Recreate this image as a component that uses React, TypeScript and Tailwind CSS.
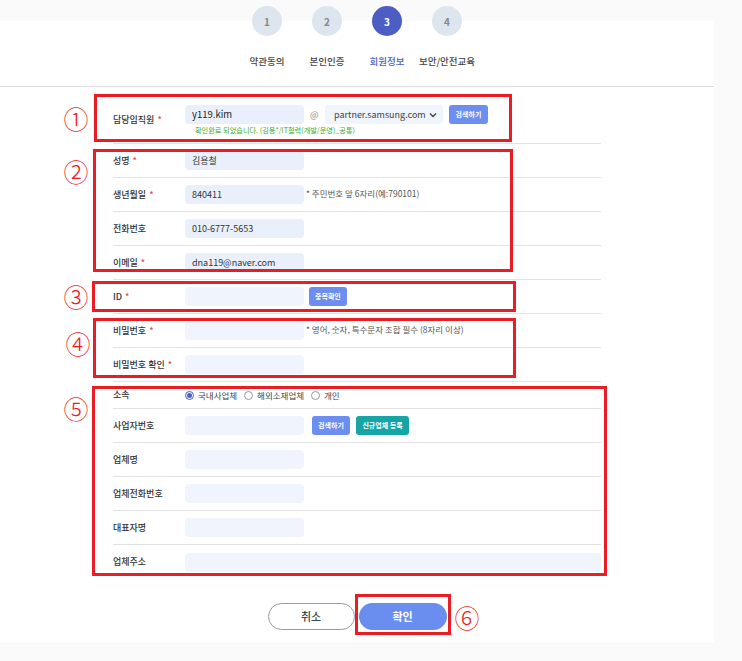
import React from 'react';

const font = "font-['Noto_Sans_CJK_KR','Noto_Sans',sans-serif]";

function Req() {
  return <span className="ml-[3px] text-[#e5484d]">*</span>;
}

function Field({ value, wide }: { value?: string; wide?: boolean }) {
  return (
    <div
      className={`flex h-[19px] items-center rounded-[4px] pl-[7px] text-[9px] text-[#333] ${
        wide ? 'w-full' : 'w-[119px]'
      } ${value ? 'bg-[#e9f0fc]' : 'bg-[#f0f5fd]'}`}
    >
      {value}
    </div>
  );
}

function Btn({ children, teal }: { children: React.ReactNode; teal?: boolean }) {
  return (
    <div
      className={`flex h-[19px] items-center justify-center rounded-[3px] px-[6px] text-[7px] font-bold text-white ${
        teal ? 'bg-[#16a4a6]' : 'bg-[#6b8ef0]'
      }`}
    >
      {children}
    </div>
  );
}

function Row({
  label,
  req,
  children,
  h = 'h-[34px]',
  last,
}: {
  label: string;
  req?: boolean;
  children?: React.ReactNode;
  h?: string;
  last?: boolean;
}) {
  return (
    <div className={`flex items-center ${h} ${last ? '' : 'border-b border-[#e2e2e2]'}`}>
      <div className="w-[72px] shrink-0 text-[9px] font-medium text-[#333]">
        {label}
        {req && <Req />}
      </div>
      <div className="flex flex-1 items-center">{children}</div>
    </div>
  );
}

function Radio({ label, on }: { label: string; on?: boolean }) {
  return (
    <div className="flex items-center gap-[4px] text-[8.5px] text-[#444]">
      <span
        className={`flex h-[9px] w-[9px] items-center justify-center rounded-full border bg-white ${
          on ? 'border-[#4d5ec4]' : 'border-[#999]'
        }`}
      >
        {on && <span className="h-[5px] w-[5px] rounded-full bg-[#4d5ec4]" />}
      </span>
      {label}
    </div>
  );
}

const steps = [
  { n: '1', label: '약관동의' },
  { n: '2', label: '본인인증' },
  { n: '3', label: '회원정보', active: true },
  { n: '4', label: '보안/안전교육' },
];

const marks = [
  { t: '①', x: 76, y: 118 },
  { t: '②', x: 76, y: 171 },
  { t: '③', x: 76, y: 296 },
  { t: '④', x: 78, y: 343 },
  { t: '⑤', x: 76, y: 408 },
  { t: '⑥', x: 467, y: 617 },
];

const boxes = [
  'left-[94px] top-[94px] w-[418px] h-[48px]',
  'left-[93px] top-[149px] w-[420px] h-[123px]',
  'left-[92px] top-[281px] w-[424px] h-[31px]',
  'left-[93px] top-[318px] w-[423px] h-[60px]',
  'left-[92px] top-[386px] w-[515px] h-[190px]',
  'left-[355px] top-[594px] w-[96px] h-[41px]',
];

export default function App() {
  return (
    <div className={`relative h-[661px] w-[742px] overflow-hidden bg-[#fafafa] pt-[21px] ${font}`}>
      <div className="h-[621px] w-[714px] bg-white">
        {/* steps */}
        <div className="flex h-[66px] justify-center border-b border-[#dedede]">
          <div className="-mt-[15px] flex">
            {steps.map((s) => (
              <div key={s.n} className="flex w-[60px] flex-col items-center">
                <div
                  className={`flex h-[30px] w-[30px] items-center justify-center rounded-full text-[10px] font-bold ${
                    s.active ? 'bg-[#4c5dc3] text-white' : 'bg-[#dde5ef] text-[#888]'
                  }`}
                >
                  {s.n}
                </div>
                <div
                  className={`mt-[18px] whitespace-nowrap text-[9.5px] leading-[14px] font-medium ${
                    s.active ? 'text-[#4c5dc3]' : 'text-[#444]'
                  }`}
                >
                  {s.label}
                </div>
              </div>
            ))}
          </div>
        </div>

        {/* form */}
        <div className="ml-[113px] w-[488px]">
          <Row label="담당임직원" req h="h-[57px] pt-[10px]">
            <div className="flex flex-col">
              <div className="flex items-center">
                <div className="flex h-[19px] w-[119px] items-center rounded-[4px] bg-[#e9f0fc] pl-[7px] text-[9.5px] text-[#222]">
                  y119.kim
                </div>
                <span className="ml-[6px] w-[15px] text-[9px] text-[#888]">@</span>
                <div className="flex h-[19px] w-[118px] items-center justify-between rounded-[4px] bg-[#f0f5fd] pl-[9px] pr-[6px] text-[9px] text-[#444]">
                  partner.samsung.com
                  <svg width="8" height="6" viewBox="0 0 8 6" fill="none">
                    <path d="M1 1.5l3 3 3-3" stroke="#444" strokeWidth="1.4" />
                  </svg>
                </div>
                <div className="ml-[6px] w-[39px]">
                  <Btn>검색하기</Btn>
                </div>
              </div>
              <div className="mt-[1px] pl-[10px] text-[7.2px] leading-[10px] text-[#3aa91e]">
                확인완료 되었습니다. (김용*/IT협력(개발/운영)_공통)
              </div>
            </div>
          </Row>
          <Row label="성명" req>
            <Field value="김용철" />
          </Row>
          <Row label="생년월일" req>
            <Field value="840411" />
            <span className="ml-[2px] -mt-[3px] text-[8.5px] text-[#555]">* 주민번호 앞 6자리(예:790101)</span>
          </Row>
          <Row label="전화번호">
            <Field value="010-6777-5653" />
          </Row>
          <Row label="이메일" req>
            <Field value="dna119@naver.com" />
          </Row>
          <Row label="ID" req>
            <Field />
            <div className="ml-[5px]">
              <Btn>중복확인</Btn>
            </div>
          </Row>
          <Row label="비밀번호" req>
            <Field />
            <span className="ml-[2px] -mt-[3px] text-[8.5px] text-[#555]">
              * 영어, 숫자, 특수문자 조합 필수 (8자리 이상)
            </span>
          </Row>
          <Row label="비밀번호 확인" req>
            <Field />
          </Row>
          <Row label="소속" h="h-[27px]">
            <div className="flex items-center gap-[7px]">
              <Radio label="국내사업체" on />
              <Radio label="해외소재업체" />
              <Radio label="개인" />
            </div>
          </Row>
          <Row label="사업자번호">
            <Field />
            <div className="ml-[8px] w-[38px]">
              <Btn>검색하기</Btn>
            </div>
            <div className="ml-[6px] w-[53px]">
              <Btn teal>신규업체 등록</Btn>
            </div>
          </Row>
          <Row label="업체명">
            <Field />
          </Row>
          <Row label="업체전화번호">
            <Field />
          </Row>
          <Row label="대표자명">
            <Field />
          </Row>
          <Row label="업체주소" last>
            <Field wide />
          </Row>
        </div>

        {/* actions */}
        <div className="mt-[24px] flex justify-center gap-[4px]">
          <div className="flex h-[27px] w-[87px] items-center justify-center rounded-full border border-[#9a9a9a] bg-white text-[11px] font-medium text-[#444]">
            취소
          </div>
          <div className="flex h-[27px] w-[88px] items-center justify-center rounded-full bg-[#6a8ef0] text-[11px] font-bold text-white">
            확인
          </div>
        </div>
      </div>

      {/* annotations */}
      {boxes.map((b, i) => (
        <div key={i} className={`pointer-events-none absolute border-[3px] border-[#ea1c24] ${b}`} />
      ))}
      {marks.map((m) => (
        <div
          key={m.t}
          className="absolute -translate-x-1/2 -translate-y-1/2 text-[25px] leading-none font-light text-[#ea1c24]"
          style={{ left: m.x, top: m.y }}
        >
          {m.t}
        </div>
      ))}
    </div>
  );
}
